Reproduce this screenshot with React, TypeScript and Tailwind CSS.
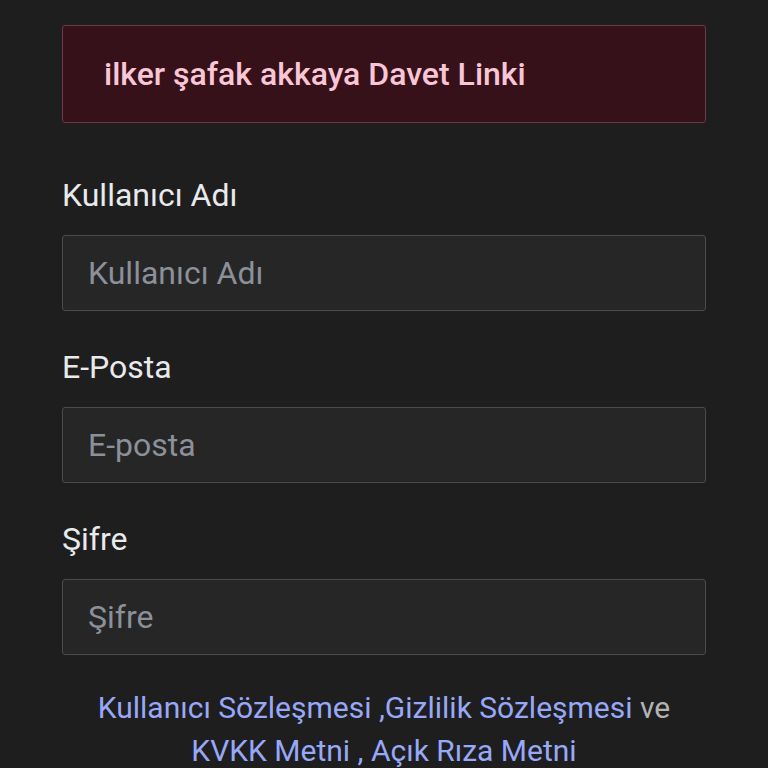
import React from "react";

const fields = [
  { label: "Kullanıcı Adı", placeholder: "Kullanıcı Adı", type: "text" },
  { label: "E-Posta", placeholder: "E-posta", type: "email" },
  { label: "Şifre", placeholder: "Şifre", type: "password" },
];

const App: React.FC = () => {
  return (
    <div
      className="min-h-screen bg-[#1e1e1e] px-[62px] pt-[25px]"
      style={{ fontFamily: "Roboto, 'Noto Sans', sans-serif" }}
    >
      {/* Invite banner */}
      <div className="h-[98px] rounded-[3px] border border-[#6a3a45] bg-[#37111a] flex items-center px-[41px]">
        <span className="text-[32px] leading-[40px] font-medium text-[#f9c6d6]">
          ilker şafak akkaya Davet Linki
        </span>
      </div>

      {/* Form */}
      <div className="mt-[52px] flex flex-col gap-[36px]">
        {fields.map((f) => (
          <div key={f.label} className="flex flex-col">
            <label className="text-[32px] leading-[40px] text-[#e8eaed] mb-[20px]">
              {f.label}
            </label>
            <input
              type={f.type}
              placeholder={f.placeholder}
              className="h-[76px] rounded-[3px] border border-[#4b4b4b] bg-[#262626] px-[25px] text-[32px] text-[#e8eaed] placeholder:text-[#8b909a] outline-none"
            />
          </div>
        ))}
      </div>

      {/* Agreements */}
      <p className="mt-[31px] text-center text-[30px] leading-[43px] text-[#b3b3b3]">
        <a className="text-[#98a8f8]">Kullanıcı Sözleşmesi</a>{" "}
        <a className="text-[#98a8f8]">,Gizlilik Sözleşmesi</a> ve{" "}
        <a className="text-[#98a8f8]">KVKK Metni</a>{" "}
        <a className="text-[#98a8f8]">, Açık Rıza Metni</a>
      </p>
    </div>
  );
};

export default App;
